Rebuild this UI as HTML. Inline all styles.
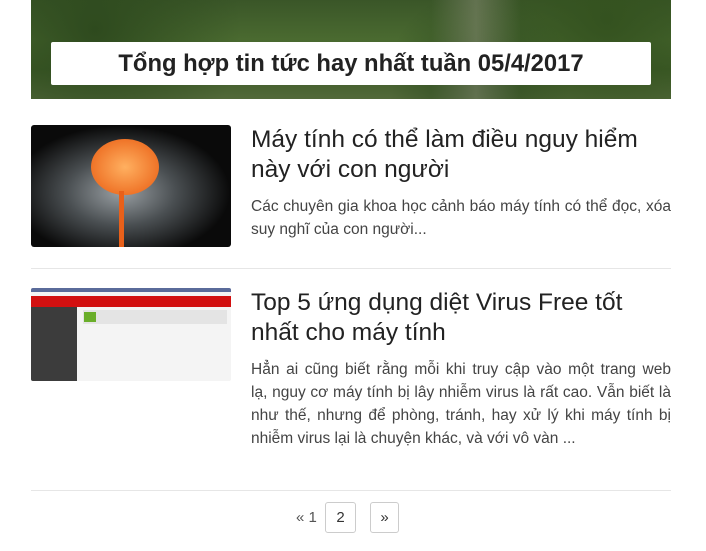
<!DOCTYPE html>
<html><head><meta charset="utf-8"><style>
*{margin:0;padding:0;box-sizing:border-box}
body{width:706px;height:551px;background:#fff;font-family:"Liberation Sans","DejaVu Sans",sans-serif;color:#333;position:relative;overflow:hidden}
.banner{position:absolute;left:31px;top:0;width:640px;height:99px;background:
radial-gradient(circle at 10% 30%,#2e4a1e 0,transparent 25%),radial-gradient(circle at 70% 80%,#2f4c20 0,transparent 20%),radial-gradient(circle at 90% 20%,#34521f 0,transparent 25%),
linear-gradient(180deg,#3a5628 0%,#4a6a30 40%,#3c5a26 70%,#52693a 100%)}
.banner:before{content:"";position:absolute;left:400px;top:0;width:90px;height:99px;background:linear-gradient(90deg,rgba(150,150,130,0),rgba(150,150,130,.45),rgba(150,150,130,0))}
.tbox{position:absolute;left:20px;top:42px;width:600px;height:43px;background:#fff;border-radius:2px;text-align:center;font-weight:bold;font-size:23.8px;line-height:44px;color:#222}
.img{position:absolute;left:31px;width:200px;border-radius:3px}
.t{position:absolute;left:251px;font-size:24.5px;line-height:30px;color:#222;width:420px}
.d{position:absolute;left:251px;font-size:15.5px;line-height:23px;color:#444;width:420px}
.d div{text-align:justify;text-align-last:justify;white-space:nowrap}
.d div.l{text-align-last:left}
.hr{position:absolute;left:31px;width:640px;height:1px;background:#e6e6e6}
.pg{position:absolute;top:502px;height:31px;border:1px solid #ccc;border-radius:3px;font-size:15px;line-height:29px;text-align:center;color:#333}
</style></head><body>
<div class="banner"><div class="tbox">Tổng hợp tin tức hay nhất tuần 05/4/2017</div></div>
<div class="img" style="top:125px;height:122px;background:radial-gradient(ellipse at 45% 55%,#9aa0a4 0%,#4a4f52 35%,#0a0a0a 70%)">
<div style="position:absolute;left:60px;top:14px;width:68px;height:56px;border-radius:50%;background:radial-gradient(#ffb060,#e85a10)"></div>
<div style="position:absolute;left:88px;top:66px;width:5px;height:56px;background:#e8601a"></div></div>
<div class="t" style="top:125px">Máy tính có thể làm điều nguy hiểm này với con người</div>
<div class="d" style="top:195px"><div>Các chuyên gia khoa học cảnh báo máy tính có thể đọc, xóa</div><div class="l">suy nghĩ của con người...</div></div>
<div class="hr" style="top:268px"></div>
<div class="img" style="top:288px;height:93px;background:#f4f4f4;border-radius:2px;overflow:hidden">
<div style="height:4px;background:#5a6b9a"></div>
<div style="position:absolute;left:0;top:8px;width:200px;height:11px;background:#d21010"></div>
<div style="position:absolute;left:0;top:19px;width:46px;height:74px;background:#3c3c3c"></div>
<div style="position:absolute;left:52px;top:22px;width:144px;height:14px;background:#e4e4e4"></div>
<div style="position:absolute;left:53px;top:24px;width:12px;height:10px;background:#6aae2a"></div></div>
<div class="t" style="top:288px">Top 5 ứng dụng diệt Virus Free tốt nhất cho máy tính</div>
<div class="d" style="top:358px"><div>Hẳn ai cũng biết rằng mỗi khi truy cập vào một trang web</div><div>lạ, nguy cơ máy tính bị lây nhiễm virus là rất cao. Vẫn biết là</div><div>như thế, nhưng để phòng, tránh, hay xử lý khi máy tính bị</div><div class="l">nhiễm virus lại là chuyện khác, và với vô vàn ...</div></div>
<div class="hr" style="top:490px"></div>
<div style="position:absolute;left:296px;top:502px;line-height:31px;font-size:15px;color:#555">« 1</div>
<div class="pg" style="left:325px;width:31px">2</div>
<div class="pg" style="left:370px;width:29px">»</div>
</body></html>
